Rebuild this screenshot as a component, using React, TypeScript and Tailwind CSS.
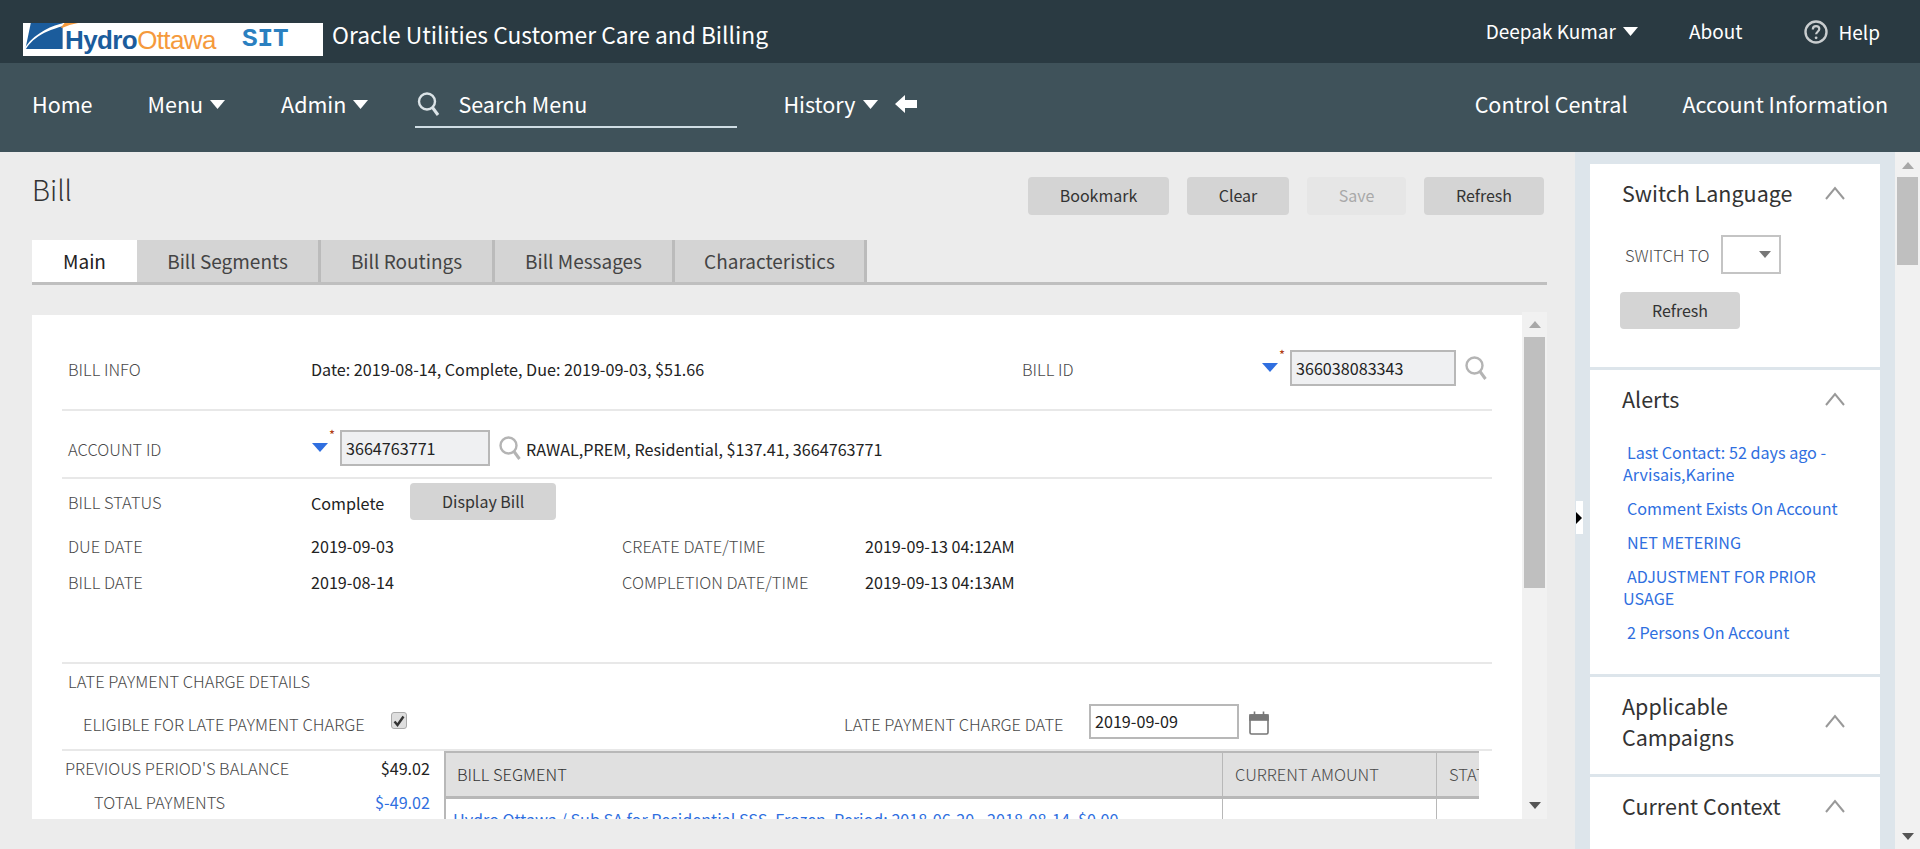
import type { ReactNode } from "react"

// ---- small drawings ----
const Tri = ({ dir = "down", className = "" }: { dir?: "up" | "down"; className?: string }) => (
  <svg viewBox="0 0 12 8" preserveAspectRatio="none" className={className} fill="currentColor">
    <polygon points={dir === "down" ? "0,0 12,0 6,8" : "6,0 12,8 0,8"} />
  </svg>
)

const Caret = () => <Tri className="ml-[7px] h-[9px] w-[15px] text-white" />

const SearchGlass = ({ className = "" }: { className?: string }) => (
  <svg viewBox="0 0 22 24" className={className} fill="none" stroke="currentColor">
    <circle cx="9.5" cy="9.5" r="8" strokeWidth="2.4" />
    <line x1="15" y1="15.5" x2="20.5" y2="23" strokeWidth="3" />
  </svg>
)

const HelpIcon = () => (
  <svg viewBox="0 0 24 24" className="h-[24px] w-[24px] text-[#c9cdcf]" fill="none" stroke="currentColor">
    <circle cx="12" cy="12" r="10.5" strokeWidth="2.4" />
    <path d="M8.8 9.4c0-2 1.4-3.2 3.3-3.2s3.2 1.2 3.2 2.9c0 2.6-3.2 2.7-3.2 5.2" strokeWidth="2.2" />
    <circle cx="12.1" cy="17.8" r="1.4" fill="currentColor" stroke="none" />
  </svg>
)

const Calendar = () => (
  <svg viewBox="0 0 20 24" className="h-[24px] w-[20px] text-[#777]" fill="none" stroke="currentColor" strokeWidth="1.6">
    <rect x="1" y="4" width="18" height="19" rx="1.5" />
    <rect x="1" y="4" width="18" height="5" fill="currentColor" />
    <line x1="5.5" y1="0.5" x2="5.5" y2="4" />
    <line x1="14.5" y1="0.5" x2="14.5" y2="4" />
  </svg>
)

const Chevron = () => (
  <svg viewBox="0 0 20 14" className="h-[14px] w-[20px] shrink-0 text-[#999]" fill="none" stroke="currentColor" strokeWidth="2">
    <polyline points="1,13 10,2 19,13" />
  </svg>
)

const Logo = () => (
  <div className="mt-[16px] flex h-[33px] w-[300px] shrink-0 items-end overflow-hidden bg-white pl-[2px]">
    <svg viewBox="0 0 54 28" className="mb-[6px] h-[27px] w-[54px] shrink-0">
      <polygon points="5,0 38,0 38,27 0,27 0,24" fill="#1b5c9c" />
      <path d="M0 27 C8 14 24 5 54 0 L40 0 C28 2 10 10 0 24 Z" fill="#fff" />
      <path d="M38 5 C42 3 48 1 54 0 L40 0 L36 5 Z" fill="#f59a3c" />
    </svg>
    <span className="mb-[2px] ml-[-14px] font-['Liberation_Sans',sans-serif] text-[26px] leading-[28px] font-bold tracking-[-0.6px] text-[#1b5c9c]">
      Hydro
    </span>
    <span className="mb-[2px] font-['Liberation_Sans',sans-serif] text-[26px] leading-[28px] tracking-[-0.6px] text-[#f59a3c]">
      Ottawa
    </span>
    <span className="mb-[4px] ml-[26px] font-['Liberation_Mono',monospace] text-[26px] leading-[26px] font-bold text-[#2a80c0]">
      SIT
    </span>
  </div>
)

// ---- form pieces ----
const Label = ({ children, className = "", color = "text-[#4a4a4a]" }: { children: ReactNode; className?: string; color?: string }) => (
  <div className={`text-[16.5px] leading-[24px] font-light whitespace-nowrap ${color} ${className}`}>{children}</div>
)

const Value = ({ children, className = "", color = "text-[#222]" }: { children: ReactNode; className?: string; color?: string }) => (
  <div className={`text-[16.15px] leading-[24px] whitespace-nowrap ${color} ${className}`}>{children}</div>
)

const Btn = ({ children, className = "", disabled = false }: { children: ReactNode; className?: string; disabled?: boolean }) => (
  <button
    type="button"
    className={`rounded-[4px] pb-[2px] text-[16px] leading-[24px] ${disabled ? "bg-[#e6e6e6] text-[#a9a9a9]" : "bg-[#d4d4d4] text-[#333]"} ${className}`}
  >
    {children}
  </button>
)

const FkField = ({ value, width }: { value: string; width: string }) => (
  <div className="flex items-start">
    <div className="relative h-[36px] w-[28px] shrink-0">
      <Tri className="absolute top-[13px] left-0 h-[9px] w-[16px] text-[#2f6fe0]" />
      <span className="absolute top-[-3px] left-[17px] text-[13px] leading-[16px] text-[#b03a10]">*</span>
    </div>
    <div className={`flex h-[36px] items-center border-2 border-[#b8b8b8] bg-[#eff0f2] pl-[4px] text-[16.15px] text-[#222] ${width}`}>{value}</div>
    <SearchGlass className="mt-[6px] ml-[9px] h-[24px] w-[22px] shrink-0 text-[#b4b4b4]" />
  </div>
)

const tabs = [
  { name: "Bill Segments", w: "w-[184px]" },
  { name: "Bill Routings", w: "w-[174px]" },
  { name: "Bill Messages", w: "w-[180px]" },
  { name: "Characteristics", w: "w-[192px]" },
]

const alerts = ["Comment Exists On Account", "NET METERING"]

const Panel = ({ title, children, className = "" }: { title: ReactNode; children?: ReactNode; className?: string }) => (
  <section className={`bg-white ${className}`}>
    <div className="flex items-center justify-between pr-[35px] pl-[32px]">
      <h3 className="text-[21.5px] leading-[31px] text-[#333]">{title}</h3>
      <Chevron />
    </div>
    {children}
  </section>
)

export default function App() {
  return (
    <div className="flex h-[849px] w-[1920px] flex-col overflow-hidden bg-[#ececec] font-['Noto_Sans_CJK_SC','Liberation_Sans',sans-serif]">
      {/* top bar */}
      <header className="flex h-[63px] shrink-0 items-center bg-[#2a3a42] pr-[40px] pl-[23px] text-white">
        <Logo />
        <span className="mt-[7px] ml-[9px] text-[22.8px] leading-[30px]">Oracle Utilities Customer Care and Billing</span>
        <div className="ml-auto flex items-center text-[19px] leading-[26px]">
          <span className="mb-[2px]">Deepak Kumar</span>
          <Caret />
          <span className="mb-[2px] ml-[51px]">About</span>
          <span className="ml-[62px]">
            <HelpIcon />
          </span>
          <span className="ml-[10px]">Help</span>
        </div>
      </header>

      {/* menu bar */}
      <nav className="flex h-[89px] shrink-0 items-center bg-[#3f525a] pr-[32px] pb-[7px] pl-[32px] text-[21.5px] leading-[30px] text-white">
        <span>Home</span>
        <span className="ml-[55px]">Menu</span>
        <Caret />
        <span className="ml-[56px]">Admin</span>
        <Caret />
        <div className="ml-[47px] flex h-[48px] w-[322px] items-center border-b-2 border-[#cfdde4] pt-[2px]">
          <SearchGlass className="ml-[2px] h-[24px] w-[23px] text-[#dbe3e7]" />
          <span className="ml-[18px]">Search Menu</span>
        </div>
        <span className="ml-[46px]">History</span>
        <Caret />
        <svg viewBox="0 0 22 18" className="ml-[17px] h-[18px] w-[22px]" fill="white">
          <polygon points="0,9 10,0 10,5 22,5 22,13 10,13 10,18" />
        </svg>
        <span className="ml-auto">Control Central</span>
        <span className="ml-[55px]">Account Information</span>
      </nav>

      <div className="flex min-h-0 flex-1">
        {/* main column */}
        <main className="flex w-[1575px] shrink-0 flex-col pl-[32px]">
          <div className="flex h-[88px] shrink-0 items-start justify-between pr-[31px]">
            <h1 className="mt-[21px] text-[28px] leading-[32px] font-light text-[#333]">Bill</h1>
            <div className="mt-[25px] flex gap-[18px]">
              <Btn className="h-[38px] w-[141px]">Bookmark</Btn>
              <Btn className="h-[38px] w-[102px]">Clear</Btn>
              <Btn disabled className="h-[38px] w-[99px]">
                Save
              </Btn>
              <Btn className="h-[38px] w-[120px]">Refresh</Btn>
            </div>
          </div>

          <div className="mr-[28px] flex h-[45px] shrink-0 border-b-[3px] border-[#bfbfbf] text-[19px] leading-[41px]">
            <div className="w-[105px] bg-white text-center text-[#222]">Main</div>
            {tabs.map((t) => (
              <div key={t.name} className={`${t.w} border-r-[3px] border-l-0 border-[#bbb] bg-[#d4d4d4] text-center text-[#444] first:border-l-[3px]`}>
                {t.name}
              </div>
            ))}
          </div>

          <div className="mt-[27px] flex h-[507px] shrink-0">
            <div className="mt-[3px] w-[1490px] overflow-hidden bg-white pl-[30px]">
              <div className="w-[1430px]">
                {/* bill info */}
                <div className="grid h-[96px] grid-cols-[249px_711px_244px_1fr] border-b-2 border-[#e8e8e8] pt-[35px]">
                  <Label className="mt-[7px] pl-[6px]">BILL INFO</Label>
                  <Value className="mt-[7px]">Date: 2019-08-14, Complete, Due: 2019-09-03, $51.66</Value>
                  <Label className="mt-[7px]">BILL ID</Label>
                  <div className="mt-0 -ml-[4px]">
                    <FkField value="366038083343" width="w-[166px]" />
                  </div>
                </div>

                {/* account */}
                <div className="grid h-[68px] grid-cols-[249px_1fr] border-b-2 border-[#e8e8e8] pt-[19px]">
                  <Label className="mt-[7px] pl-[6px]">ACCOUNT ID</Label>
                  <div className="flex items-start pl-[1px]">
                    <FkField value="3664763771" width="w-[150px]" />
                    <Value className="mt-[7px] ml-[5px]">RAWAL,PREM, Residential, $137.41, 3664763771</Value>
                  </div>
                </div>

                {/* status and dates */}
                <div className="h-[185px] border-b-2 border-[#e8e8e8] pt-[4px]">
                  <div className="grid grid-cols-[249px_1fr]">
                    <Label className="mt-[7px] pl-[6px]">BILL STATUS</Label>
                    <div className="flex items-start">
                      <Value className="mt-[8px]">Complete</Value>
                      <Btn className="ml-[26px] h-[37px] w-[146px]">Display Bill</Btn>
                    </div>
                  </div>
                  <div className="mt-[14px] grid grid-cols-[249px_311px_243px_1fr] gap-y-[12px]">
                    <Label className="pl-[6px]">DUE DATE</Label>
                    <Value>2019-09-03</Value>
                    <Label>CREATE DATE/TIME</Label>
                    <Value>2019-09-13 04:12AM</Value>
                    <Label className="pl-[6px]">BILL DATE</Label>
                    <Value>2019-08-14</Value>
                    <Label>COMPLETION DATE/TIME</Label>
                    <Value>2019-09-13 04:13AM</Value>
                  </div>
                </div>

                {/* late payment */}
                <div className="h-[87px] border-b-2 border-[#e8e8e8] pt-[5px]">
                  <Label className="pl-[6px]">LATE PAYMENT CHARGE DETAILS</Label>
                  <div className="mt-[11px] flex items-start">
                    <div className="w-[329px] pl-[21px]">
                      <Label className="mt-[8px]">ELIGIBLE FOR LATE PAYMENT CHARGE</Label>
                    </div>
                    <div className="mt-[8px] flex h-[17px] w-[16px] items-center justify-center rounded-[3px] border border-[#aaa] bg-[#dedede]">
                      <svg viewBox="0 0 12 12" className="h-[12px] w-[12px]" fill="none" stroke="#333" strokeWidth="2.4">
                        <path d="M1.5 6.5 L4.5 10 L10.5 1.5" />
                      </svg>
                    </div>
                    <Label className="mt-[8px] ml-[437px] w-[245px]">LATE PAYMENT CHARGE DATE</Label>
                    <div className="flex h-[35px] w-[150px] items-center border-2 border-[#b8b8b8] pl-[4px] text-[16.15px] text-[#222]">2019-09-09</div>
                    <span className="mt-[7px] ml-[10px]">
                      <Calendar />
                    </span>
                  </div>
                </div>

                {/* balances and bill segment grid */}
                <div className="flex">
                  <div className="w-[382px] pt-[5px] pr-[14px] pl-[3px]">
                    <div className="flex justify-between">
                      <Label>PREVIOUS PERIOD'S BALANCE</Label>
                      <Value>$49.02</Value>
                    </div>
                    <div className="mt-[10px] flex justify-between">
                      <Label className="pl-[29px]">TOTAL PAYMENTS</Label>
                      <Value color="text-[#2f6fe0]">$-49.02</Value>
                    </div>
                  </div>
                  <div className="h-[120px] w-[1035px] overflow-hidden border-l-2 border-[#b8b8b8]">
                    <div className="grid h-[48px] grid-cols-[776px_214px_1fr] border-t-2 border-b-[3px] border-[#b8b8b8] bg-[#e0e0e0]">
                      <div className="flex items-center pb-[2px] pl-[11px]">
                        <Label color="text-[#333]">BILL SEGMENT</Label>
                      </div>
                      <div className="flex items-center border-l border-[#b8b8b8] pb-[2px] pl-[12px]">
                        <Label>CURRENT AMOUNT</Label>
                      </div>
                      <div className="flex items-center overflow-hidden border-l border-[#b8b8b8] pb-[2px] pl-[12px]">
                        <Label>STATUS</Label>
                      </div>
                    </div>
                    <div className="grid grid-cols-[776px_214px_1fr]">
                      <Value color="text-[#2f6fe0]" className="pt-[8px] pl-[7px]">
                        Hydro Ottawa / Sub SA for Residential SSS, Frozen, Period: 2018-06-20 - 2018-08-14, $0.00
                      </Value>
                      <div className="h-[40px] border-l border-[#b8b8b8]" />
                      <div className="h-[40px] border-l border-[#b8b8b8]" />
                    </div>
                  </div>
                </div>
              </div>
            </div>

            {/* inner scrollbar */}
            <div className="flex w-[25px] flex-col items-center bg-[#f1f1f1]">
              <Tri dir="up" className="mt-[9px] h-[7px] w-[12px] text-[#a8a8a8]" />
              <div className="mt-[9px] h-[251px] w-[21px] bg-[#bfbfbf]" />
              <Tri className="mt-auto mb-[10px] h-[7px] w-[12px] text-[#555]" />
            </div>
          </div>
        </main>

        {/* right sidebar */}
        <aside className="relative flex w-[320px] shrink-0 flex-col gap-[3px] overflow-hidden bg-[#dde5eb] px-[15px] pt-[12px]">
          <div className="absolute top-[349px] left-[1px] flex h-[33px] w-[7px] items-center bg-white">
            <svg viewBox="0 0 6 12" className="h-[12px] w-[6px]" fill="black">
              <polygon points="0,0 6,6 0,12" />
            </svg>
          </div>

          <Panel title="Switch Language" className="h-[203px] shrink-0 pt-[13px]">
            <div className="mt-[27px] flex items-center pl-[35px]">
              <Label>SWITCH TO</Label>
              <div className="ml-[12px] flex h-[39px] w-[60px] items-center justify-end border-2 border-[#c4c4c4] pr-[8px]">
                <Tri className="h-[7px] w-[12px] text-[#777]" />
              </div>
            </div>
            <Btn className="mt-[18px] ml-[30px] h-[37px] w-[120px]">Refresh</Btn>
          </Panel>

          <Panel title="Alerts" className="h-[304px] shrink-0 pt-[13px]">
            <ul className="mt-[27px] w-[260px] pl-[33px] text-[16.15px] leading-[22px] text-[#2f6fe0]">
              <li className="indent-[4px]">Last Contact: 52 days ago - Arvisais,Karine</li>
              {alerts.map((a) => (
                <li key={a} className="mt-[12px] indent-[4px]">
                  {a}
                </li>
              ))}
              <li className="mt-[12px] indent-[4px]">ADJUSTMENT FOR PRIOR USAGE</li>
              <li className="mt-[12px] indent-[4px]">2 Persons On Account</li>
            </ul>
          </Panel>

          <Panel title={<>Applicable<br />Campaigns</>} className="h-[97px] shrink-0 pt-[13px]" />
          <Panel title="Current Context" className="flex-1 pt-[13px]" />
        </aside>

        {/* page scrollbar */}
        <div className="flex w-[25px] shrink-0 flex-col items-center bg-[#f1f1f1]">
          <Tri dir="up" className="mt-[10px] h-[7px] w-[12px] text-[#a8a8a8]" />
          <div className="mt-[8px] h-[88px] w-[21px] bg-[#bfbfbf]" />
          <Tri className="mt-auto mb-[9px] h-[7px] w-[12px] text-[#555]" />
        </div>
      </div>
    </div>
  )
}
